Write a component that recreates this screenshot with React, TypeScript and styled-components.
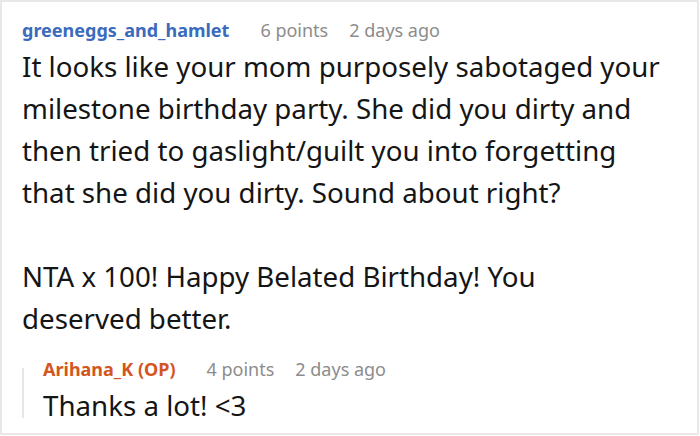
import styled, { createGlobalStyle } from "styled-components"

const GlobalStyle = createGlobalStyle`
  html, body {
    margin: 0;
    padding: 0;
    background: #fff;
  }
  body {
    font-family: "Noto Sans", "Open Sans", sans-serif;
  }
`

const Card = styled.article`
  box-sizing: border-box;
  width: 699px;
  height: 435px;
  border: 2px solid #e8e8e8;
  padding: 15px 0 0 20px;
  overflow: hidden;
`

const Meta = styled.div`
  display: flex;
  align-items: baseline;
  font-size: 18px;
  line-height: 26px;
`

const Author = styled.span<{ $op?: boolean }>`
  font-weight: 700;
  margin-right: 31px;
  color: ${(p) => (p.$op ? "#d4561f" : "#3a6bbd")};
`

const Info = styled.span`
  color: #8c8c8c;
  margin-right: 21px;
`

const Body = styled.div`
  margin-top: 2px;
  font-size: 27.7px;
  line-height: 42px;
  color: #151515;
  p {
    margin: 0;
  }
  p + p {
    margin-top: 42px;
  }
`

const Reply = styled.div`
  position: relative;
  margin-top: 17px;
  padding-left: 21px;
  &::before {
    content: "";
    position: absolute;
    left: 0;
    top: 12px;
    height: 50px;
    width: 2px;
    background: #e6e6e6;
  }
`

const Comment = ({ author, points, op, children }: { author: string; points: number; op?: boolean; children: React.ReactNode }) => (
  <>
    <Meta>
      <Author $op={op}>{author}</Author>
      <Info>{points} points</Info>
      <Info>2 days ago</Info>
    </Meta>
    <Body>{children}</Body>
  </>
)

const App = () => {
  return (
    <>
      <GlobalStyle />
      <Card>
        <Comment author="greeneggs_and_hamlet" points={6}>
          <p>
            It looks like your mom purposely sabotaged your<br />
            milestone birthday party. She did you dirty and<br />
            then tried to gaslight/guilt you into forgetting<br />
            that she did you dirty. Sound about right?
          </p>
          <p>
            NTA x 100! Happy Belated Birthday! You<br />
            deserved better.
          </p>
        </Comment>
        <Reply>
          <Comment author="Arihana_K (OP)" points={4} op>
            <p>Thanks a lot! &lt;3</p>
          </Comment>
        </Reply>
      </Card>
    </>
  )
}

export default App
